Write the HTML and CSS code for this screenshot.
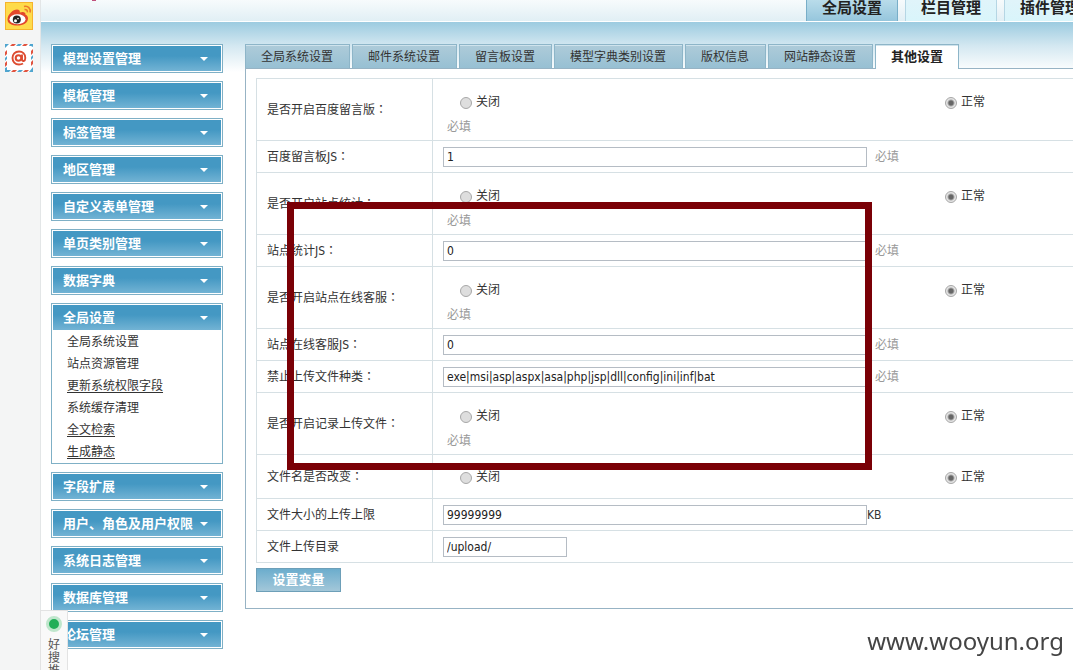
FILE: index.html
```html
<!DOCTYPE html>
<html lang="zh-CN">
<head>
    <meta charset="UTF-8">
    <meta name="viewport" content="width=device-width, initial-scale=1.0">
    <title>全局设置</title>
    <link rel="stylesheet" href="styles.css">
</head>
<body>
    <aside class="rail">
        <a href="#" aria-label="微博">
            <svg width="28" height="28" viewBox="0 0 28 28">
                <rect x="0.5" y="0.5" width="27" height="27" fill="#fedb4b" stroke="#f6b32c"/>
                <path d="M2.500 17.500c0-5 5.500-10 9.500-10 2 0 3.200 1 2.800 3 3.200-1.200 6-.6 5.700 2.300 1.800.6 2.500 2 2.500 3.700 0 4.500-5 7-10.500 7s-10-2-10-6z" fill="#e2472c"/>
                <ellipse cx="12.500" cy="17.200" rx="8" ry="5" fill="#fff"/>
                <circle cx="11.800" cy="17.500" r="4" fill="#222"/>
                <circle cx="10.500" cy="18.800" r="1.500" fill="#fff"/>
                <circle cx="13" cy="16.600" r="0.800" fill="#fff"/>
                <path d="M19 4.500c4-1 7 2 6 6M19.500 7.500c2-.3 3.200 1 2.800 2.800" fill="none" stroke="#ec7a2c" stroke-width="1.600"/>
            </svg>
        </a>
        <a href="#" aria-label="邮箱">
            <svg width="28" height="28" viewBox="0 0 28 28">
                <rect width="28" height="28" fill="#fff"/>
                <g>
                    <path d="M7 0h4l-2 2H5zM19 0h4l-2 2h-4zM8 26h4l-2 2H6zM20 26h4l-2 2h-4zM0 8l2-2v4l-2 2zM0 19l2-2v4l-2 2zM26 7l2-2v4l-2 2zM26 18l2-2v4l-2 2z" fill="#e0533f"/>
                    <path d="M0 0h4L0 4zM13 0h4l-2 2h-4zM25 0h3v3l-2-1h-2zM2 26h4l-2 2H0zM14 26h4l-2 2h-4zM0 14l2-2v3l-2 2zM0 24l2-1v3l-2 2zM26 13l2-2v3l-2 2zM28 23v5h-4z" fill="#4fa5cf"/>
                </g>
                <circle cx="13.500" cy="14" r="2.800" fill="none" stroke="#dd4b30" stroke-width="2"/>
                <path d="M17 10.500v5c0 2.500 3.300 2 3.300-1.500 0-4-2.800-6.500-6.300-6.500-4 0-6.500 3-6.500 6.500s2.500 6.500 6.500 6.500c1.500 0 3-.4 4-1" fill="none" stroke="#dd4b30" stroke-width="1.900"/>
            </svg>
        </a>
    </aside>

    <div class="page">
        <header class="header">
            <span class="logo-tail"></span>
            <nav class="top-nav">
                <a href="#" class="active">全局设置</a>
                <a href="#">栏目管理</a>
                <a href="#">插件管理</a>
            </nav>
        </header>

        <div class="columns">
            <nav class="sidebar">
                <div class="menu"><button type="button">模型设置管理</button></div>
                <div class="menu"><button type="button">模板管理</button></div>
                <div class="menu"><button type="button">标签管理</button></div>
                <div class="menu"><button type="button">地区管理</button></div>
                <div class="menu"><button type="button">自定义表单管理</button></div>
                <div class="menu"><button type="button">单页类别管理</button></div>
                <div class="menu"><button type="button">数据字典</button></div>
                <div class="menu open">
                    <button type="button">全局设置</button>
                    <ul>
                        <li><a href="#">全局系统设置</a></li>
                        <li><a href="#">站点资源管理</a></li>
                        <li><a href="#" class="underlined">更新系统权限字段</a></li>
                        <li><a href="#">系统缓存清理</a></li>
                        <li><a href="#" class="underlined">全文检索</a></li>
                        <li><a href="#" class="underlined">生成静态</a></li>
                    </ul>
                </div>
                <div class="menu"><button type="button">字段扩展</button></div>
                <div class="menu"><button type="button">用户、角色及用户权限</button></div>
                <div class="menu"><button type="button">系统日志管理</button></div>
                <div class="menu"><button type="button">数据库管理</button></div>
                <div class="menu"><button type="button">论坛管理</button></div>
            </nav>

            <main class="content">
                <nav class="tabs">
                    <a href="#">全局系统设置</a>
                    <a href="#">邮件系统设置</a>
                    <a href="#">留言板设置</a>
                    <a href="#">模型字典类别设置</a>
                    <a href="#">版权信息</a>
                    <a href="#">网站静态设置</a>
                    <a href="#" class="active">其他设置</a>
                </nav>

                <form class="panel">
                    <table class="settings">
                        <tr class="tall">
                            <th scope="row">是否开启百度留言版<span class="colon" lang="zh-TW">：</span></th>
                            <td>
                                <div class="options">
                                    <label><input type="radio" name="baidu">关闭</label>
                                    <label><input type="radio" name="baidu" checked>正常</label>
                                </div>
                                <p class="hint">必填</p>
                            </td>
                        </tr>
                        <tr>
                            <th scope="row"><label for="baidu-js">百度留言板JS<span class="colon" lang="zh-TW">：</span></label></th>
                            <td><div class="field"><input type="text" id="baidu-js" value="1"><span class="hint">必填</span></div></td>
                        </tr>
                        <tr class="tall">
                            <th scope="row">是否开启站点统计<span class="colon" lang="zh-TW">：</span></th>
                            <td>
                                <div class="options">
                                    <label><input type="radio" name="stats">关闭</label>
                                    <label><input type="radio" name="stats" checked>正常</label>
                                </div>
                                <p class="hint">必填</p>
                            </td>
                        </tr>
                        <tr>
                            <th scope="row"><label for="stats-js">站点统计JS<span class="colon" lang="zh-TW">：</span></label></th>
                            <td><div class="field"><input type="text" id="stats-js" value="0"><span class="hint">必填</span></div></td>
                        </tr>
                        <tr class="tall">
                            <th scope="row">是否开启站点在线客服<span class="colon" lang="zh-TW">：</span></th>
                            <td>
                                <div class="options">
                                    <label><input type="radio" name="service">关闭</label>
                                    <label><input type="radio" name="service" checked>正常</label>
                                </div>
                                <p class="hint">必填</p>
                            </td>
                        </tr>
                        <tr>
                            <th scope="row"><label for="service-js">站点在线客服JS<span class="colon" lang="zh-TW">：</span></label></th>
                            <td><div class="field"><input type="text" id="service-js" value="0"><span class="hint">必填</span></div></td>
                        </tr>
                        <tr>
                            <th scope="row"><label for="banned">禁止上传文件种类<span class="colon" lang="zh-TW">：</span></label></th>
                            <td><div class="field"><input type="text" id="banned" value="exe|msi|asp|aspx|asa|php|jsp|dll|config|ini|inf|bat"><span class="hint">必填</span></div></td>
                        </tr>
                        <tr class="tall">
                            <th scope="row">是否开启记录上传文件<span class="colon" lang="zh-TW">：</span></th>
                            <td>
                                <div class="options">
                                    <label><input type="radio" name="record">关闭</label>
                                    <label><input type="radio" name="record" checked>正常</label>
                                </div>
                                <p class="hint">必填</p>
                            </td>
                        </tr>
                        <tr class="medium">
                            <th scope="row">文件名是否改变<span class="colon" lang="zh-TW">：</span></th>
                            <td>
                                <div class="options">
                                    <label><input type="radio" name="rename">关闭</label>
                                    <label><input type="radio" name="rename" checked>正常</label>
                                </div>
                            </td>
                        </tr>
                        <tr>
                            <th scope="row"><label for="max-size">文件大小的上传上限</label></th>
                            <td><div class="field"><input type="text" id="max-size" value="99999999"><span>KB</span></div></td>
                        </tr>
                        <tr>
                            <th scope="row"><label for="upload-dir">文件上传目录</label></th>
                            <td><div class="field"><input type="text" id="upload-dir" class="short" value="/upload/"></div></td>
                        </tr>
                    </table>
                    <button type="submit" class="save">设置变量</button>
                </form>
            </main>
        </div>
    </div>

    <div class="marker"></div>
    <div class="promo">
        <i class="dot"></i>
        <span>好搜推</span>
    </div>
    <div class="watermark">www.wooyun.org</div>
</body>
</html>
```

FILE: styles.css
```css
* {
    box-sizing: border-box;
}

body {
    display: flex;
    min-height: 100vh;
    margin: 0;
    overflow: hidden;
    background: #fff;
    color: #333;
    font-family: "DejaVu Sans Condensed", "Noto Sans CJK SC", sans-serif;
    font-size: 12px;
    line-height: 20px;
}

a {
    color: inherit;
    text-decoration: none;
}

button, input {
    font: inherit;
}

/* left tool strip */
.rail {
    display: flex;
    flex: none;
    flex-direction: column;
    gap: 14px;
    width: 41px;
    padding: 2px 0 0 5px;
    background: #f4f5f5;
    border-right: 1px solid #e3e6e7;
}

.rail a, .rail svg {
    display: block;
    height: 28px;
}

.page {
    flex: 1;
    min-width: 0;
}

/* header */
.header {
    position: relative;
    display: flex;
    height: 22px;
    padding-left: 765px;
    overflow: hidden;
    background: linear-gradient(#f7fbfc, #e1eff5);
    border-bottom: 1px solid #fff;
}

.logo-tail {
    position: absolute;
    top: 0;
    left: 51px;
    width: 4px;
    height: 1px;
    background: #c0507c;
}

.top-nav {
    display: flex;
    flex: none;
    gap: 7px;
}

.top-nav a {
    padding: 0 15px;
    height: 21px;
    border: solid #b5d6e4;
    border-width: 0 1px;
    background: linear-gradient(#e0f4fa, #d9f5fb);
    color: #222;
    font-size: 15px;
    font-weight: bold;
    line-height: 16px;
}

.top-nav .active {
    height: 22px;
    border-color: #78aec8;
    background: linear-gradient(#b9dcea, #94c5dc);
}

.columns {
    display: flex;
    gap: 22px;
    padding: 22px 0 0 10px;
    background: linear-gradient(#9ccbe0, #d4e8f1 24px, #fff 50px);
}

/* sidebar */
.sidebar {
    display: flex;
    flex: none;
    flex-direction: column;
    gap: 8px;
    width: 172px;
}

.menu {
    padding: 1px;
    border: 1px solid #7fb0c6;
    background: #fff;
}

.menu button {
    display: flex;
    align-items: center;
    justify-content: space-between;
    width: 100%;
    height: 25px;
    padding: 0 13px 0 10px;
    border: 0;
    background: linear-gradient(#4498c3 40%, #72b3d4);
    color: #fff;
    font-size: 13px;
    font-weight: bold;
    line-height: 20px;
    white-space: nowrap;
}

.menu button::after {
    content: "";
    border: 4px solid transparent;
    border-top-color: #fff;
    border-bottom: 0;
}

.menu.open {
    padding-bottom: 0;
}

.menu ul {
    margin: 0;
    padding: 1px 0 0 14px;
    list-style: none;
}

.menu li {
    height: 22px;
    line-height: 22px;
}

.underlined {
    text-decoration: underline;
    text-underline-offset: 2px;
}

/* tabs */
.content {
    flex: none;
    width: 1190px;
}

.tabs {
    display: flex;
    gap: 2px;
}

.tabs a {
    height: 24px;
    padding: 0 16px 0 15px;
    border: 1px solid #8db5c8;
    border-bottom: 0;
    background: linear-gradient(#aecbd9, #97c0d3);
    box-shadow: inset 0 1px #cfe3ec;
    line-height: 24px;
}

.tabs .active {
    height: 25px;
    margin-bottom: -1px;
    padding: 0 15px;
    background: #fff;
    color: #222;
    font-size: 13px;
    font-weight: bold;
    z-index: 1;
}

.panel {
    padding: 9px 10px 16px;
    border: 1px solid #97b3c4;
    background: #fff;
}

/* settings table */
.settings {
    width: 100%;
    border-collapse: collapse;
}

.settings th, .settings td {
    height: 32px;
    padding: 0 10px;
    border: 1px solid #d6e0e4;
    text-align: left;
    vertical-align: middle;
}

.settings th {
    width: 176px;
    font-weight: normal;
}

.settings .medium td {
    height: 44px;
}

.settings .tall td {
    height: 62px;
    padding-top: 8px;
}

.colon {
    font-family: "Noto Sans CJK TC", sans-serif;
}

.options {
    display: grid;
    grid-template-columns: 1fr 1fr;
    width: 970px;
    height: 26px;
    align-items: center;
}

.options label {
    display: flex;
    align-items: center;
    gap: 4px;
    padding-left: 17px;
}

.options input {
    appearance: none;
    width: 12px;
    height: 12px;
    margin: 2px 0 0;
    border: 1px solid #a8a8a8;
    border-radius: 50%;
    background: #dedede;
}

.options input:checked {
    background: radial-gradient(circle, #666 2px, #e4e4e4 4px);
}

.hint {
    color: #999;
}

p.hint {
    height: 24px;
    margin: 0;
    padding-left: 4px;
    line-height: 24px;
}

.field {
    display: flex;
    align-items: center;
}

.field .hint {
    margin-left: 8px;
}

.field input {
    width: 424px;
    height: 20px;
    padding: 1px 3px 0;
    border: 1px solid #b5bcc4;
    background: #fff;
    color: #222;
}

.field .short {
    width: 124px;
}

.save {
    display: block;
    width: 85px;
    height: 24px;
    margin-top: 5px;
    padding: 0;
    border: 1px solid #6d9fb8;
    background: linear-gradient(#6cadcd, #a3c7d9);
    color: #fff;
    font-size: 13px;
    font-weight: bold;
}

/* things lying over the page */
.marker {
    position: absolute;
    top: 202px;
    left: 287px;
    width: 585px;
    height: 268px;
    border: 7px solid #7a0006;
}

.promo {
    position: absolute;
    top: 610px;
    left: 40px;
    width: 28px;
    height: 90px;
    padding: 5px 7px 0;
    border: 1px solid #e3e3e3;
    background: #f9f9f9;
    color: #555;
    line-height: 13px;
}

.dot {
    display: block;
    width: 16px;
    height: 16px;
    margin: 0 -2px 7px;
    border: 3px solid #bfe6cc;
    border-radius: 50%;
    background: #21ae57;
}

.watermark {
    position: fixed;
    right: 9px;
    bottom: 12px;
    color: #444;
    font-family: "Noto Sans", sans-serif;
    font-size: 24px;
    line-height: 34px;
}
```
